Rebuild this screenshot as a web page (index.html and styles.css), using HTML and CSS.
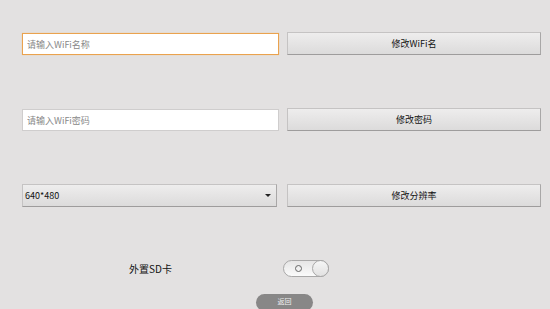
FILE: index.html
```html
<!DOCTYPE html>
<html lang="zh-CN">
<head>
    <meta charset="UTF-8">
    <meta name="viewport" content="width=device-width, initial-scale=1.0">
    <title>设置</title>
    <link rel="stylesheet" href="styles.css">
</head>
<body>
<div id="wrap">
    <div class="row">
        <input class="field focus" type="text" placeholder="请输入WiFi名称">
        <button class="btn">修改WiFi名</button>
    </div>
    <div class="row">
        <input class="field" type="text" placeholder="请输入WiFi密码">
        <button class="btn">修改密码</button>
    </div>
    <div class="row">
        <div class="select">
            <span>640*480</span>
            <i class="arrow"></i>
        </div>
        <button class="btn">修改分辨率</button>
    </div>
    <div class="sdRow">
        <div class="label">外置SD卡</div>
        <div class="switch">
            <span class="off"></span>
            <span class="thumb"></span>
        </div>
    </div>
    <div class="backRow">
        <button class="back">返回</button>
    </div>
</div>
</body>
</html>
```

FILE: styles.css
```css
html, body {
    margin: 0;
    height: 100%;
    overflow: hidden;
}
body {
    background: #e3e1e1;
    font-family: "Noto Sans CJK SC", "Liberation Sans", sans-serif;
}
#wrap {
    padding: 32px 9px 0 22px;
}
.row {
    display: grid;
    grid-template-columns: 257px 254px;
    column-gap: 8px;
    height: 23px;
    margin-bottom: 53px;
}
.field {
    box-sizing: border-box;
    height: 22px;
    margin: 1px 0 0 0;
    padding: 0 4px;
    background: #fff;
    border: 1px solid #cfcdcd;
    font: 9px "Noto Sans CJK SC", sans-serif;
    color: #555;
    outline: none;
}
.field::placeholder {
    color: #888;
}
.field.focus {
    border: 1px solid #eaa24e;
    box-shadow: 0 0 1px #f3c48a;
}
.btn, .select {
    box-sizing: border-box;
    height: 23px;
    background: linear-gradient(#eeeded, #dcdbdb);
    border: 1px solid #c5c3c3;
    border-bottom-color: #9e9c9c;
    border-right-color: #a9a7a7;
    font: 9px "Noto Sans CJK SC", sans-serif;
    color: #111;
    padding: 0;
}
.select {
    display: flex;
    align-items: center;
    justify-content: space-between;
    width: 255px;
    padding: 0 5px 0 2px;
}
.arrow {
    width: 0;
    height: 0;
    border-left: 3px solid transparent;
    border-right: 3px solid transparent;
    border-top: 3px solid #222;
}
.sdRow {
    display: flex;
    align-items: center;
    margin-top: 2px;
    height: 17px;
}
.label {
    width: 257px;
    text-align: center;
    font-size: 10px;
    color: #111;
}
.switch {
    position: relative;
    box-sizing: border-box;
    width: 46px;
    height: 17px;
    margin-left: 4px;
    border: 1px solid #a9a8a8;
    border-radius: 9px;
    background: linear-gradient(#e6e5e5, #fbfbfb);
}
.off {
    position: absolute;
    left: 11px;
    top: 4px;
    box-sizing: border-box;
    width: 7px;
    height: 7px;
    border: 1px solid #666;
    border-radius: 50%;
}
.thumb {
    position: absolute;
    right: -1px;
    top: -1px;
    box-sizing: border-box;
    width: 17px;
    height: 17px;
    border: 1px solid #a9a8a8;
    border-radius: 50%;
    background: linear-gradient(#f6f6f6, #e2e1e1);
}
.backRow {
    display: flex;
    justify-content: center;
    padding-left: 6px;
    margin-top: 17px;
}
.back {
    width: 57px;
    height: 17px;
    padding: 0 0 3px;
    border: none;
    border-radius: 9px;
    background: #888787;
    color: #eee;
    font: 7px "Noto Sans CJK SC", sans-serif;
}
```
